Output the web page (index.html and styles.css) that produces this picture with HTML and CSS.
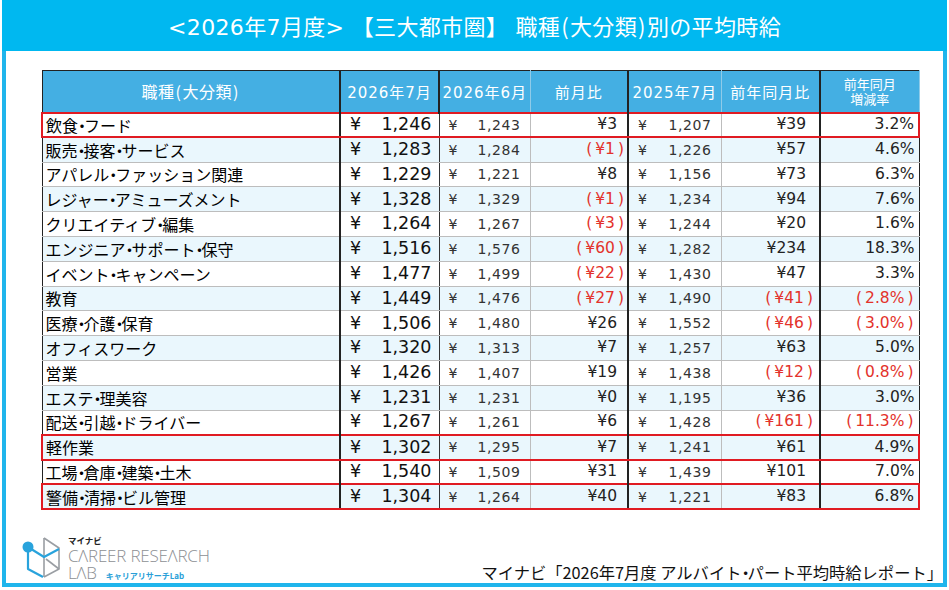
FILE: index.html
```html
<!DOCTYPE html>
<html lang="ja">
<head>
<meta charset="utf-8">
<title>職種(大分類)別の平均時給</title>
<link rel="stylesheet" href="styles.css">
</head>
<body>
<div class="frame">
  <div class="title">&lt;2026年7月度&gt; 【三大都市圏】 職種<span class="paren">(</span>大分類<span class="paren">)</span>別の平均時給</div>
  <div class="content">
    <table class="wage">
      <colgroup>
        <col class="c-job"><col class="c-cur"><col class="c-prev"><col class="c-diff"><col class="c-ly"><col class="c-ydiff"><col class="c-rate">
      </colgroup>
      <thead>
        <tr>
          <th class="job-h">職種<span class="paren">(</span>大分類<span class="paren">)</span></th>
          <th class="thick">2026年7月</th>
          <th>2026年6月</th>
          <th class="thick">前月比</th>
          <th>2025年7月</th>
          <th class="thick">前年同月比</th>
          <th class="two">前年同月<br>増減率</th>
        </tr>
      </thead>
      <tbody>
        <tr class="hl"><td class="job">飲食<span class="dot">・</span>フード</td><td class="cur"><div class="amt"><span>¥</span><span>1,246</span></div></td><td class="prev"><div class="amt"><span>¥</span><span>1,243</span></div></td><td class="diff">¥3</td><td class="ly"><div class="amt"><span>¥</span><span>1,207</span></div></td><td class="ydiff">¥39</td><td class="rate">3.2%</td></tr>
        <tr class="alt"><td class="job">販売<span class="dot">・</span>接客<span class="dot">・</span>サービス</td><td class="cur"><div class="amt"><span>¥</span><span>1,283</span></div></td><td class="prev"><div class="amt"><span>¥</span><span>1,284</span></div></td><td class="diff neg">(<span class="v">¥1</span>)</td><td class="ly"><div class="amt"><span>¥</span><span>1,226</span></div></td><td class="ydiff">¥57</td><td class="rate">4.6%</td></tr>
        <tr><td class="job">アパレル<span class="dot">・</span>ファッション関連</td><td class="cur"><div class="amt"><span>¥</span><span>1,229</span></div></td><td class="prev"><div class="amt"><span>¥</span><span>1,221</span></div></td><td class="diff">¥8</td><td class="ly"><div class="amt"><span>¥</span><span>1,156</span></div></td><td class="ydiff">¥73</td><td class="rate">6.3%</td></tr>
        <tr class="alt"><td class="job">レジャー<span class="dot">・</span>アミューズメント</td><td class="cur"><div class="amt"><span>¥</span><span>1,328</span></div></td><td class="prev"><div class="amt"><span>¥</span><span>1,329</span></div></td><td class="diff neg">(<span class="v">¥1</span>)</td><td class="ly"><div class="amt"><span>¥</span><span>1,234</span></div></td><td class="ydiff">¥94</td><td class="rate">7.6%</td></tr>
        <tr><td class="job">クリエイティブ<span class="dot">・</span>編集</td><td class="cur"><div class="amt"><span>¥</span><span>1,264</span></div></td><td class="prev"><div class="amt"><span>¥</span><span>1,267</span></div></td><td class="diff neg">(<span class="v">¥3</span>)</td><td class="ly"><div class="amt"><span>¥</span><span>1,244</span></div></td><td class="ydiff">¥20</td><td class="rate">1.6%</td></tr>
        <tr class="alt"><td class="job">エンジニア<span class="dot">・</span>サポート<span class="dot">・</span>保守</td><td class="cur"><div class="amt"><span>¥</span><span>1,516</span></div></td><td class="prev"><div class="amt"><span>¥</span><span>1,576</span></div></td><td class="diff neg">(<span class="v">¥60</span>)</td><td class="ly"><div class="amt"><span>¥</span><span>1,282</span></div></td><td class="ydiff">¥234</td><td class="rate">18.3%</td></tr>
        <tr><td class="job">イベント<span class="dot">・</span>キャンペーン</td><td class="cur"><div class="amt"><span>¥</span><span>1,477</span></div></td><td class="prev"><div class="amt"><span>¥</span><span>1,499</span></div></td><td class="diff neg">(<span class="v">¥22</span>)</td><td class="ly"><div class="amt"><span>¥</span><span>1,430</span></div></td><td class="ydiff">¥47</td><td class="rate">3.3%</td></tr>
        <tr class="alt"><td class="job">教育</td><td class="cur"><div class="amt"><span>¥</span><span>1,449</span></div></td><td class="prev"><div class="amt"><span>¥</span><span>1,476</span></div></td><td class="diff neg">(<span class="v">¥27</span>)</td><td class="ly"><div class="amt"><span>¥</span><span>1,490</span></div></td><td class="ydiff neg">(<span class="v">¥41</span>)</td><td class="rate neg">(<span class="v">2.8%</span>)</td></tr>
        <tr><td class="job">医療<span class="dot">・</span>介護<span class="dot">・</span>保育</td><td class="cur"><div class="amt"><span>¥</span><span>1,506</span></div></td><td class="prev"><div class="amt"><span>¥</span><span>1,480</span></div></td><td class="diff">¥26</td><td class="ly"><div class="amt"><span>¥</span><span>1,552</span></div></td><td class="ydiff neg">(<span class="v">¥46</span>)</td><td class="rate neg">(<span class="v">3.0%</span>)</td></tr>
        <tr class="alt"><td class="job">オフィスワーク</td><td class="cur"><div class="amt"><span>¥</span><span>1,320</span></div></td><td class="prev"><div class="amt"><span>¥</span><span>1,313</span></div></td><td class="diff">¥7</td><td class="ly"><div class="amt"><span>¥</span><span>1,257</span></div></td><td class="ydiff">¥63</td><td class="rate">5.0%</td></tr>
        <tr><td class="job">営業</td><td class="cur"><div class="amt"><span>¥</span><span>1,426</span></div></td><td class="prev"><div class="amt"><span>¥</span><span>1,407</span></div></td><td class="diff">¥19</td><td class="ly"><div class="amt"><span>¥</span><span>1,438</span></div></td><td class="ydiff neg">(<span class="v">¥12</span>)</td><td class="rate neg">(<span class="v">0.8%</span>)</td></tr>
        <tr class="alt"><td class="job">エステ<span class="dot">・</span>理美容</td><td class="cur"><div class="amt"><span>¥</span><span>1,231</span></div></td><td class="prev"><div class="amt"><span>¥</span><span>1,231</span></div></td><td class="diff">¥0</td><td class="ly"><div class="amt"><span>¥</span><span>1,195</span></div></td><td class="ydiff">¥36</td><td class="rate">3.0%</td></tr>
        <tr><td class="job">配送<span class="dot">・</span>引越<span class="dot">・</span>ドライバー</td><td class="cur"><div class="amt"><span>¥</span><span>1,267</span></div></td><td class="prev"><div class="amt"><span>¥</span><span>1,261</span></div></td><td class="diff">¥6</td><td class="ly"><div class="amt"><span>¥</span><span>1,428</span></div></td><td class="ydiff neg">(<span class="v">¥161</span>)</td><td class="rate neg">(<span class="v">11.3%</span>)</td></tr>
        <tr class="alt hl"><td class="job">軽作業</td><td class="cur"><div class="amt"><span>¥</span><span>1,302</span></div></td><td class="prev"><div class="amt"><span>¥</span><span>1,295</span></div></td><td class="diff">¥7</td><td class="ly"><div class="amt"><span>¥</span><span>1,241</span></div></td><td class="ydiff">¥61</td><td class="rate">4.9%</td></tr>
        <tr><td class="job">工場<span class="dot">・</span>倉庫<span class="dot">・</span>建築<span class="dot">・</span>土木</td><td class="cur"><div class="amt"><span>¥</span><span>1,540</span></div></td><td class="prev"><div class="amt"><span>¥</span><span>1,509</span></div></td><td class="diff">¥31</td><td class="ly"><div class="amt"><span>¥</span><span>1,439</span></div></td><td class="ydiff">¥101</td><td class="rate">7.0%</td></tr>
        <tr class="alt hl"><td class="job">警備<span class="dot">・</span>清掃<span class="dot">・</span>ビル管理</td><td class="cur"><div class="amt"><span>¥</span><span>1,304</span></div></td><td class="prev"><div class="amt"><span>¥</span><span>1,264</span></div></td><td class="diff">¥40</td><td class="ly"><div class="amt"><span>¥</span><span>1,221</span></div></td><td class="ydiff">¥83</td><td class="rate">6.8%</td></tr>
      </tbody>
    </table>
  </div>
  <div class="footer">
    <div class="logo">
      <svg class="logo-icon" width="47" height="47" viewBox="0 0 47 47">
        <g fill="none" stroke="#9a9ea3" stroke-width="1.6" stroke-linejoin="round">
          <path d="M28 3 L43 13 L43 34 L28 42"/>
          <path d="M28 3 L28 22"/>
          <path d="M30 24 L43 34"/>
          <path d="M28 22 L28 42"/>
        </g>
        <g fill="none" stroke="#29a3dc" stroke-width="2.2" stroke-linejoin="round">
          <path d="M12 12 L28 22 L43 14"/>
          <path d="M12 14 L12 34 L27 42"/>
        </g>
        <circle cx="12" cy="12" r="5.5" fill="#29a3dc"/>
      </svg>
      <div class="logo-text">
        <div class="brand">マイナビ</div>
        <div class="crl">CΛREER RESEΛRCH</div>
        <div class="lab-row"><span class="lab">LΛB</span><span class="lab-jp">キャリアリサーチLab</span></div>
      </div>
    </div>
    <div class="source">マイナビ「2026年7月度 アルバイト<span class="dot">・</span>パート平均時給レポート」</div>
  </div>
</div>
</body>
</html>
```
FILE: styles.css
```css
html, body {
  margin: 0;
  padding: 0;
  background: #ffffff;
}

body {
  font-family: "Noto Sans CJK JP", sans-serif;
  color: #000;
}

.frame {
  width: 937px;
  height: 583px;
  margin: 0 2px;
  border: 4px solid #1fb5ec;
  border-top: 0;
  background: #fff;
}

.title {
  height: 51px;
  margin: 0 -4px;
  background: #00b8f0;
  color: #fff;
  font-family: "DejaVu Sans", "Noto Sans CJK JP", sans-serif;
  font-size: 22px;
  letter-spacing: 0.35px;
  line-height: 51px;
  text-align: center;
  white-space: nowrap;
}

.paren {
  font-family: "Noto Sans CJK JP", sans-serif;
  margin: 0 1px;
}

.dot {
  font-feature-settings: "palt";
  letter-spacing: -2px;
}

.content {
  padding: 19px 0 0 35px;
}

.wage {
  border-collapse: collapse;
  table-layout: fixed;
  width: 877px;
  border: 1px solid #222;
}

.c-job { width: 298px; }
.c-cur { width: 99px; }
.c-prev { width: 91px; }
.c-diff { width: 98px; }
.c-ly { width: 93px; }
.c-ydiff { width: 99px; }
.c-rate { width: 99px; }

.wage th {
  box-sizing: border-box;
  height: 42px;
  padding: 0;
  background: #44afe3;
  color: #fff;
  font-family: "DejaVu Sans", "Noto Sans CJK JP", sans-serif;
  font-weight: normal;
  font-size: 15px;
  letter-spacing: 1px;
  text-align: center;
  vertical-align: middle;
  border-top: 1px solid #222;
  border-bottom: 1px solid #2a2a2a;
  border-right: 1px solid #8fcbe9;
}

.wage th.job-h {
  font-family: "Noto Sans CJK JP", sans-serif;
  font-size: 16px;
  letter-spacing: 0.5px;
  border-right: 2px solid #222;
}

.wage th.thick {
  border-right: 2px solid #222;
}

.wage th.two {
  font-family: "Noto Sans CJK JP", sans-serif;
  font-size: 13px;
  line-height: 1.2;
  letter-spacing: 0;
}

.wage td {
  box-sizing: border-box;
  height: 24.8px;
  padding: 0;
  vertical-align: middle;
  line-height: 1;
  border-bottom: 1px solid #bdbdbd;
  border-right: 1px solid #bdbdbd;
  white-space: nowrap;
}

.wage tr.alt td {
  background: #eaf7fd;
}

.wage td.job {
  padding-left: 3px;
  font-size: 16px;
  border-right: 2px solid #222;
}

.amt {
  display: flex;
  justify-content: space-between;
  align-items: center;
}

.wage td.cur {
  padding: 0 7px 0 9px;
  font-family: "DejaVu Sans", sans-serif;
  font-size: 17.5px;
  color: #111;
  border-right: 1px solid #333;
}

.wage td.prev,
.wage td.ly {
  padding: 0 9px 0 9px;
  font-family: "DejaVu Sans", sans-serif;
  font-size: 14px;
  letter-spacing: 0.6px;
  color: #333;
}

.wage td.diff,
.wage td.ydiff,
.wage td.rate {
  text-align: right;
  font-family: "DejaVu Sans", sans-serif;
  font-size: 15.5px;
  color: #222;
}

.wage td.diff {
  padding-right: 10px;
  border-right: 2px solid #222;
}

.wage td.ydiff {
  padding-right: 13px;
  border-right: 2px solid #222;
}

.wage td.rate {
  padding-right: 4px;
  border-right: 1px solid #222;
}

.wage td.neg {
  color: #e3322b;
}

.wage td.diff.neg {
  padding-right: 3px;
}

.wage td.ydiff.neg {
  padding-right: 6px;
}

.wage td.rate.neg {
  padding-right: 5px;
}

.v {
  margin: 0 3px;
}

.wage tr.hl td {
  border-top: 2px solid #e01b22;
  border-bottom: 2px solid #e01b22;
}

.wage tr.hl td:first-child {
  border-left: 2px solid #e01b22;
}

.wage tr.hl td:last-child {
  border-right: 2px solid #e01b22;
}

.footer {
  display: flex;
  justify-content: space-between;
  align-items: flex-end;
  margin-top: 25px;
  padding: 0 0 2px 10px;
}

.logo {
  display: flex;
  align-items: flex-start;
  gap: 5px;
}

.logo-icon {
  display: block;
}

.logo-text {
  display: flex;
  flex-direction: column;
}

.brand {
  font-size: 8.5px;
  font-weight: bold;
  line-height: 11px;
  margin-bottom: 1px;
  color: #222;
}

.crl,
.lab {
  font-family: "Open Sans", sans-serif;
  font-weight: 300;
  font-size: 17px;
  line-height: 17px;
  color: #8d9094;
  letter-spacing: -0.2px;
}

.lab-row {
  display: flex;
  align-items: baseline;
  gap: 9px;
}

.lab-jp {
  font-size: 8px;
  font-weight: bold;
  color: #2a9fd8;
}

.source {
  font-size: 16.3px;
  line-height: 20px;
  color: #111;
  white-space: nowrap;
}
```
